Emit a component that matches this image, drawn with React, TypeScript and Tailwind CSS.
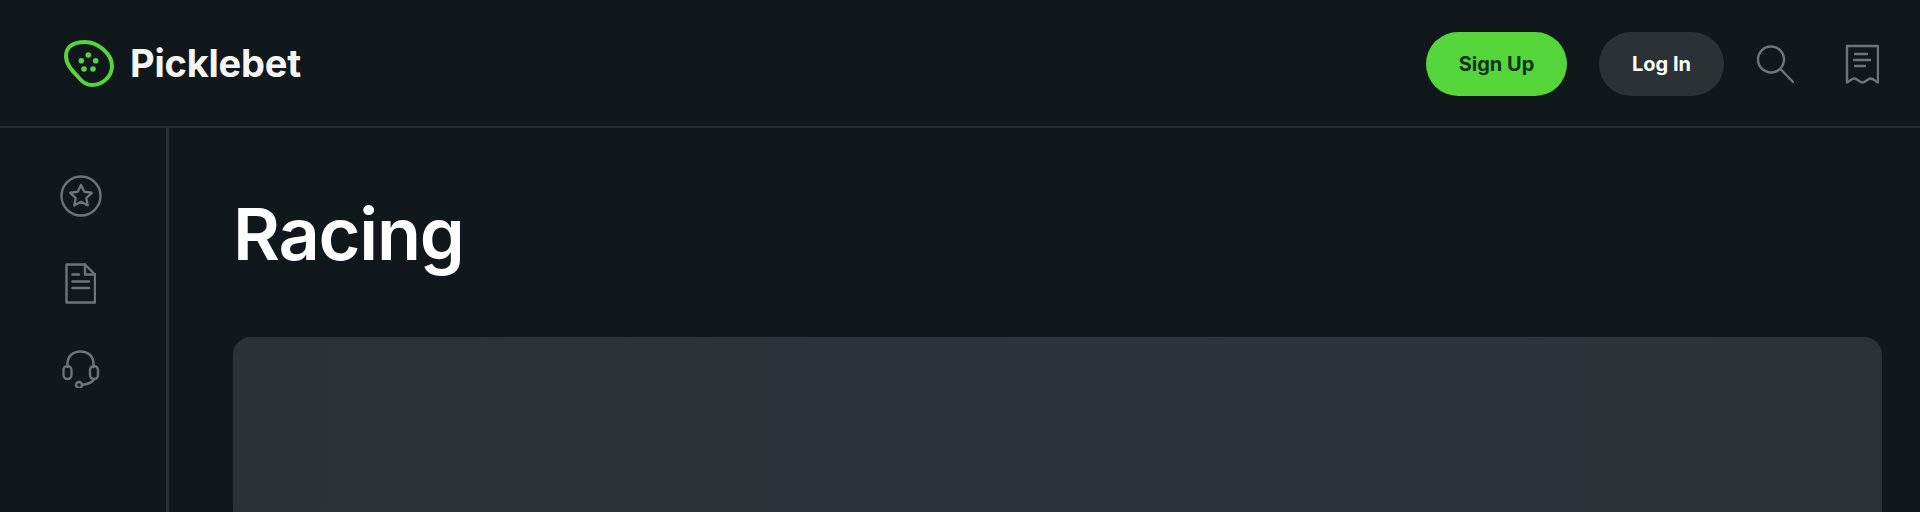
const iconColor = '#6e7477';

function Logo() {
  return (
    <svg width="52" height="48" viewBox="0 0 52 48" fill="none" className="-ml-px shrink-0">
      <path
        d="M3 17C3 8 10 3 22 3C35 3 49 15 49 27C49 38 39 46 29 46C24 46 20 43.500 17 40C12 34 3 27 3 17Z"
        stroke="#54d63b"
        strokeWidth="4"
      />
      <g fill="#54d63b">
        <circle cx="25.300" cy="16" r="2.800" />
        <circle cx="18.300" cy="21.700" r="2.800" />
        <circle cx="32.700" cy="21.700" r="2.800" />
        <circle cx="21" cy="30" r="2.800" />
        <circle cx="30" cy="30" r="2.800" />
      </g>
    </svg>
  );
}

function SearchIcon() {
  return (
    <svg width="38" height="38" viewBox="0 0 38 38" fill="none" stroke={iconColor} strokeWidth="2.400" strokeLinecap="round">
      <circle cx="15" cy="14.500" r="13" />
      <path d="M24.500 24L37 37" />
    </svg>
  );
}

function ReceiptIcon() {
  return (
    <svg width="34" height="40" viewBox="0 0 34 40" fill="none" stroke={iconColor} strokeWidth="2.400" strokeLinejoin="round" strokeLinecap="round">
      <path d="M2 2H33V38.500C30 37 28.500 34.500 25.500 34.500C22.500 34.500 21 38.500 17.500 38.500C14 38.500 12.500 34.500 9.500 34.500C6.500 34.500 4.500 37 2 38.500Z" />
      <path d="M10 10H22M9 16H25M10 22H20" />
    </svg>
  );
}

function StarIcon() {
  return (
    <svg width="42" height="42" viewBox="0 0 42 42" fill="none" stroke={iconColor} strokeWidth="2.400" strokeLinejoin="round">
      <circle cx="21" cy="21" r="19.500" />
      <path d="M21 10L24.300 16.800L31.800 17.800L26.300 23L27.700 30.400L21 26.800L14.300 30.400L15.700 23L10.200 17.800L17.700 16.800Z" />
    </svg>
  );
}

function DocIcon() {
  return (
    <svg width="31" height="41" viewBox="0 0 31 41" fill="none" stroke={iconColor} strokeWidth="2.400" strokeLinejoin="round" strokeLinecap="round">
      <path d="M1.500 1.500H20L30 11.500V39.500H1.500Z" />
      <path d="M20 1.500V11.500H30" />
      <path d="M7.500 11.500H14M7.500 18.500H24M7.500 25H24" />
    </svg>
  );
}

function HeadsetIcon() {
  return (
    <svg width="38" height="38" viewBox="0 0 38 38" fill="none" stroke={iconColor} strokeWidth="2.400" strokeLinecap="round">
      <path d="M5.500 17V14C5.500 6 11 1.500 18.500 1.500C26 1.500 31.500 6 31.500 14V17" />
      <rect x="1.500" y="16" width="8" height="13" rx="4" />
      <rect x="28" y="16" width="8" height="13" rx="4" />
      <path d="M32 29C31 32 26 34 20 35" />
      <circle cx="17" cy="35" r="3" />
    </svg>
  );
}

export default function App() {
  return (
    <div className="h-[512px] overflow-hidden bg-[#10181c] font-['Inter',sans-serif]">
      {/* Top bar */}
      <header className="flex h-[128px] items-center justify-between border-b-2 border-[#262d31] pl-[64px] pr-[41px]">
        <a className="flex items-center gap-[15px]">
          <Logo />
          <span className="text-[38px] font-bold leading-none tracking-[-0.2px] text-[#f4f5f5]">Picklebet</span>
        </a>
        <div className="flex translate-y-px items-center">
          <button className="ml-px h-[64px] w-[141px] rounded-full bg-[#54d63b] text-[20px] font-bold text-[#15301a]">
            Sign Up
          </button>
          <button className="ml-[32px] h-[64px] w-[125px] rounded-full bg-[#2b3135] text-[20px] font-bold text-white">
            Log In
          </button>
          <span className="ml-[32px]"><SearchIcon /></span>
          <span className="ml-[51px]"><ReceiptIcon /></span>
        </div>
      </header>

      <div className="flex">
        {/* Icon rail */}
        <aside className="flex h-[384px] w-[169px] shrink-0 flex-col items-center gap-[46px] border-r-[3px] border-[#2a3135] pr-[5px] pt-[47px]">
          <StarIcon />
          <DocIcon />
          <HeadsetIcon />
        </aside>

        <main className="flex-1 pl-[64px] pr-[38px] pt-[62px]">
          <h1 className="text-[72px] font-semibold leading-[88px] tracking-[-1.2px] text-white">Racing</h1>
          <div className="mt-[59px] h-[300px] rounded-t-[18px] bg-gradient-to-r from-[#2b3235] via-[#2d3339] via-70% to-[#2c3336]" />
        </main>
      </div>
    </div>
  );
}
